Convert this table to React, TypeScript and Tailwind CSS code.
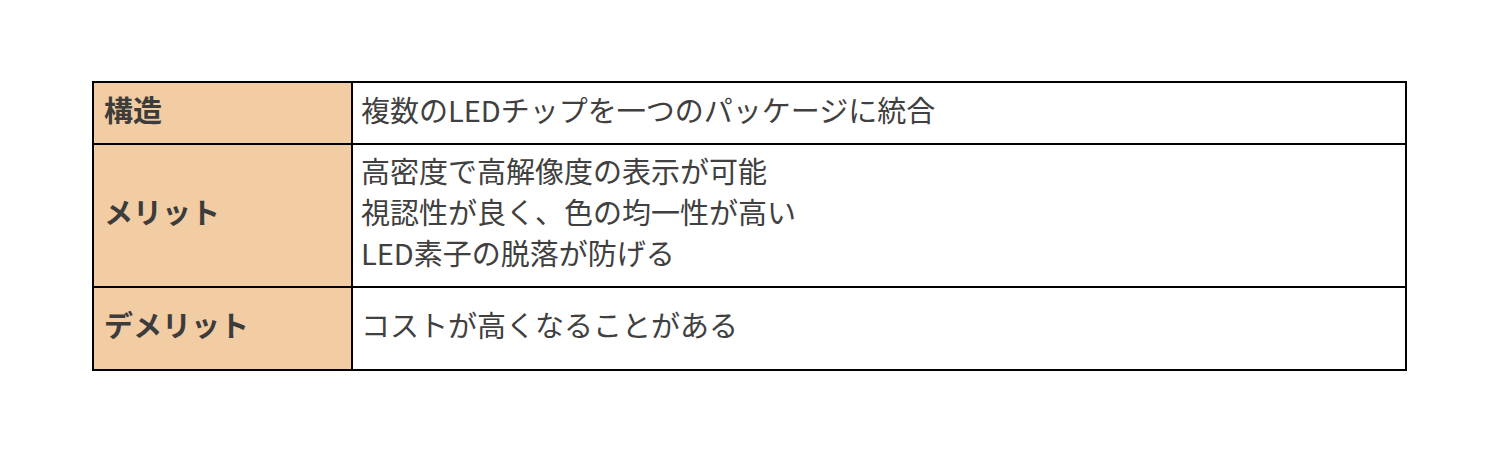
import React from "react";

const rows = [
  { h: "構造", lines: ["複数のLEDチップを一つのパッケージに統合"], height: "h-[60px]" },
  {
    h: "メリット",
    lines: ["高密度で高解像度の表示が可能", "視認性が良く、色の均一性が高い", "LED素子の脱落が防げる"],
    height: "h-[143px]",
  },
  { h: "デメリット", lines: ["コストが高くなることがある"], height: "h-[83px]" },
];

export default function App() {
  return (
    <div
      className="w-[1498px] h-[470px] bg-white pt-[81px] pl-[92px]"
      style={{ fontFamily: '"Noto Sans CJK JP", "Noto Sans", sans-serif' }}
    >
      <div className="w-[1315px] border-[2px] border-solid border-black flex flex-col">
        {rows.map((r, i) => (
          <div
            key={i}
            className={`flex shrink-0 ${r.height} ${i > 0 ? "border-t-[2px] border-solid border-black" : ""}`}
          >
            <div className="w-[259px] shrink-0 bg-[#f2cca2] border-r-[2px] border-solid border-black flex items-center pl-[10px] pb-[7px] text-[29px] font-bold text-[#3c3c3c]">
              {r.h}
            </div>
            <div className="flex-1 flex flex-col justify-center pl-[8px] pb-[8px] text-[29px] leading-[41px] text-[#404040]">
              {r.lines.map((l, j) => (
                <div key={j}>{l}</div>
              ))}
            </div>
          </div>
        ))}
      </div>
    </div>
  );
}
